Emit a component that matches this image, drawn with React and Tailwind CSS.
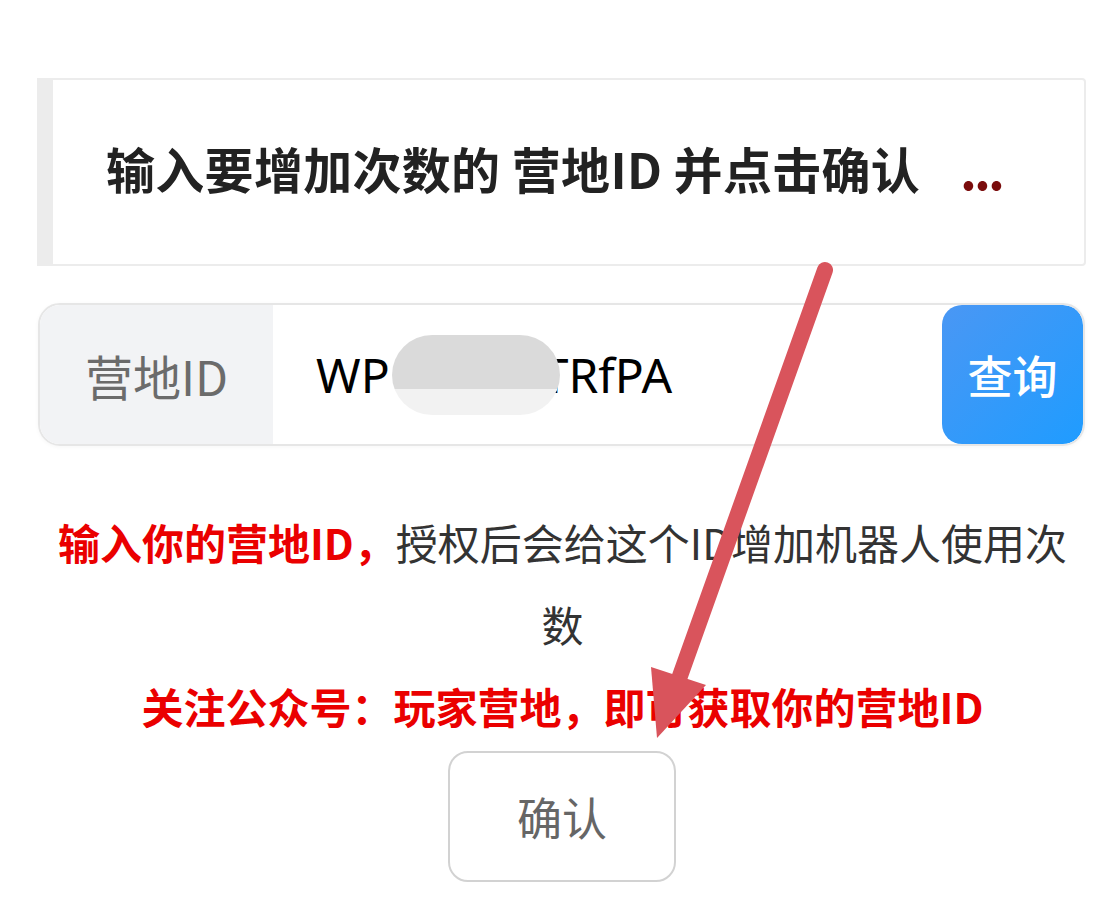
import React from "react"

const CJK = { fontFamily: '"Noto Sans CJK SC", "Noto Sans", sans-serif' }

function Arrow() {
  // red annotation arrow drawn over the form
  return (
    <svg
      className="pointer-events-none absolute left-0 top-0"
      width="1120"
      height="901"
      viewBox="0 0 1120 901"
    >
      <line x1="825" y1="270" x2="675" y2="690" stroke="#d9545c" strokeWidth="16" strokeLinecap="round" />
      <polygon points="651,667 706,685 657,738" fill="#d9545c" />
    </svg>
  )
}

export default function App() {
  return (
    <div className="relative h-[901px] w-[1120px] overflow-hidden bg-white" style={CJK}>
      <div className="pt-[78px]">
        <div className="ml-[37px] flex h-[188px] w-[1049px] items-center rounded-r-[4px] border-2 border-l-[16px] border-[#ececec] pb-[8px] pl-[53px]">
          <span className="text-[49px] font-bold tracking-[0.3px] text-[#222]">输入要增加次数的 营地ID 并点击确认</span>
          <span className="ml-[40px] text-[52px] font-bold leading-none tracking-[-3px] text-[#7a0c0c]">...</span>
        </div>

        <div className="ml-[38px] mt-[37px] flex h-[143px] w-[1047px] overflow-hidden rounded-[22px] border-2 border-[#e6e6e6] shadow-[0_1px_4px_rgba(0,0,0,0.04)]">
          <div className="flex w-[233px] items-center bg-[#f2f3f5] pl-[45px] text-[48px] text-[#6b6b6b]">
            营地ID
          </div>
          <div
            className="flex flex-1 items-center pl-[43px] text-[48px] text-black"
            style={{ fontFamily: '"Noto Sans", sans-serif' }}
          >
            <span>WP</span>
            <span className="relative z-10 ml-[2px] -mr-[18px] inline-block h-[80px] w-[168px] rounded-[40px] bg-[linear-gradient(to_bottom,#dadada_68%,#f2f2f2_68%)]" />
            <span>TRfPA</span>
          </div>
          <button
            type="button"
            className="h-full w-[141px] rounded-[20px] bg-[linear-gradient(135deg,#4a97f4,#1f9cff)] text-[45px] font-medium text-white"
          >
            查询
          </button>
        </div>

        <p className="ml-[40px] mt-[55px] w-[1045px] text-center text-[42px] leading-[82px] text-[#333]">
          <span className="font-bold text-[#ea0000]">输入你的营地ID，</span>
          授权后会给这个ID增加机器人使用次数
        </p>
        <p className="ml-[40px] w-[1045px] text-center text-[42px] font-bold leading-[82px] text-[#ea0000]">
          关注公众号：玩家营地，即可获取你的营地ID
        </p>

        <button
          type="button"
          className="ml-[448px] mt-[4px] flex h-[131px] w-[228px] items-center justify-center rounded-[20px] border-2 border-[#d2d2d2] text-[45px] text-[#666]"
        >
          确认
        </button>
      </div>
      <Arrow />
    </div>
  )
}
